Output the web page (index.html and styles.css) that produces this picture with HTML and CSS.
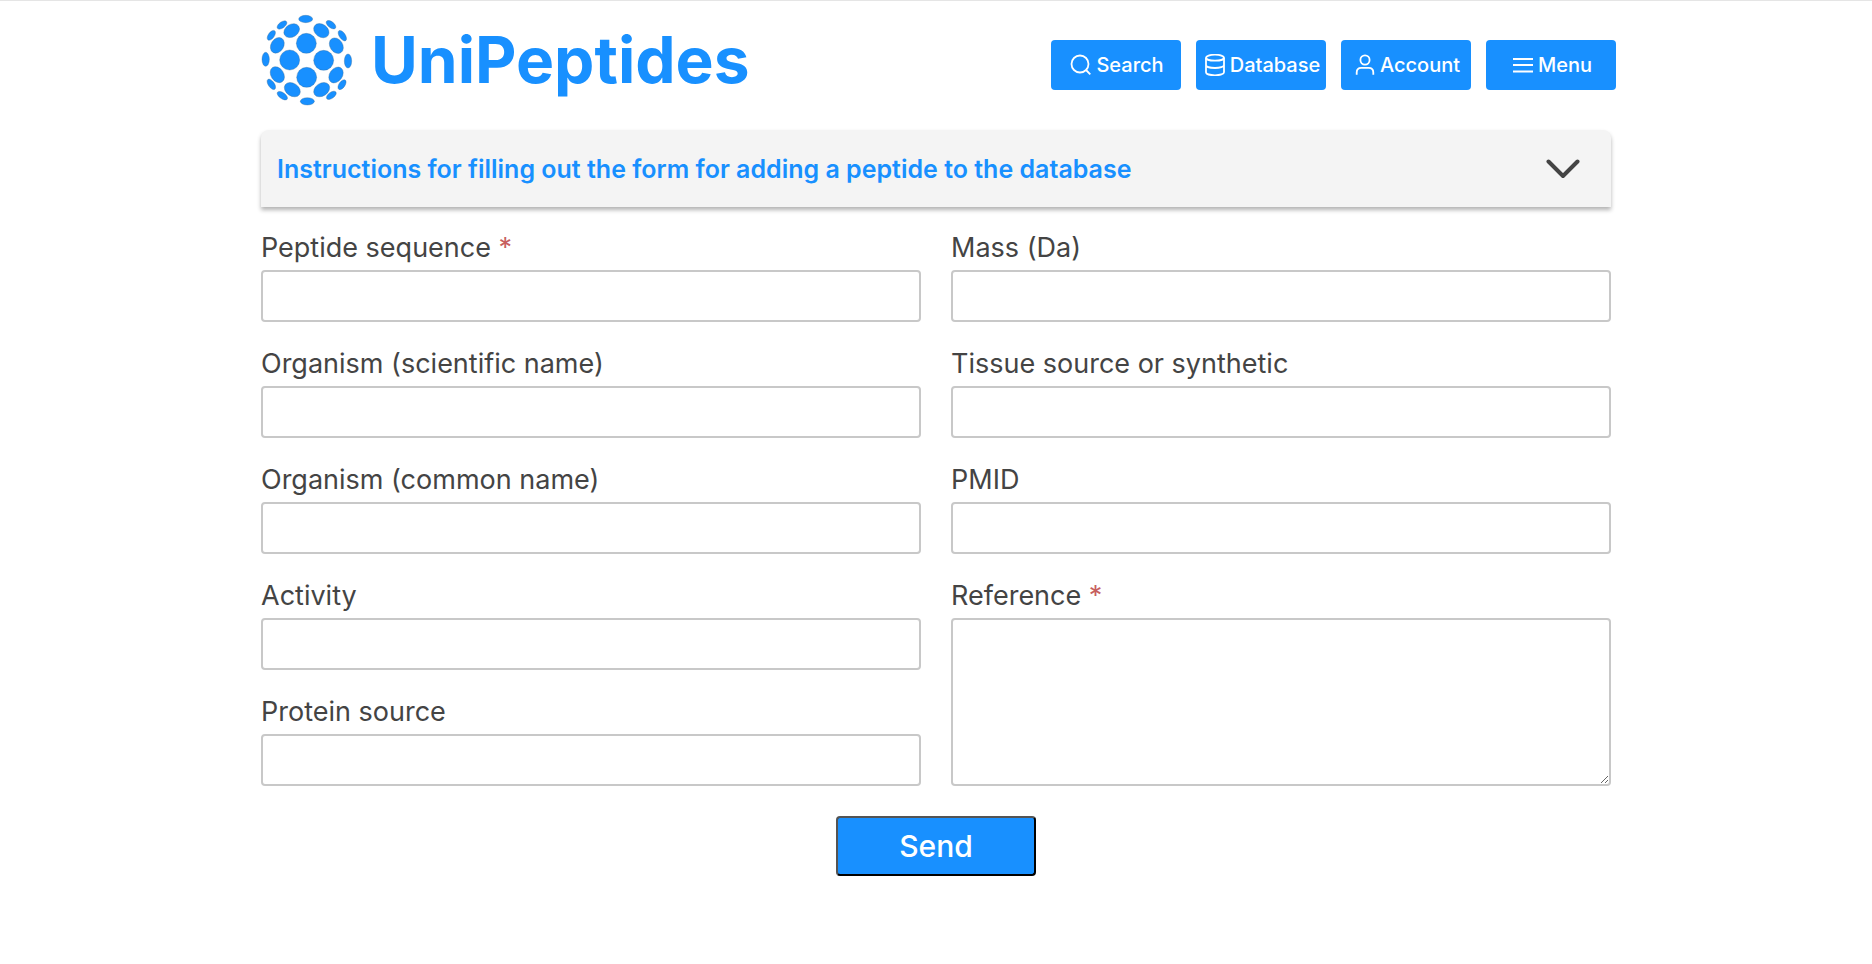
FILE: index.html
```html
<!DOCTYPE html>
<html lang="en">
<head>
<meta charset="utf-8">
<meta name="viewport" content="width=device-width, initial-scale=1">
<title>UniPeptides</title>
<link rel="stylesheet" href="styles.css">
</head>
<body>
<div class="page">
  <header class="header">
    <a class="brand" href="#">
      <svg class="brand-logo" viewBox="33 42 276 276" aria-hidden="true">
        <ellipse cx="167" cy="57" rx="21" ry="11"/>
        <ellipse cx="172" cy="304" rx="21" ry="11"/>
        <ellipse cx="47" cy="178" rx="11" ry="21"/>
        <ellipse cx="294" cy="183" rx="11" ry="21"/>
        <circle cx="169" cy="130" r="30"/>
        <circle cx="119" cy="180" r="30"/>
        <circle cx="221" cy="181" r="30"/>
        <circle cx="170" cy="232" r="30"/>
        <ellipse cx="125" cy="92" rx="25" ry="19" transform="rotate(-32 125 92)"/>
        <ellipse cx="214" cy="92" rx="25" ry="19" transform="rotate(36 214 92)"/>
        <ellipse cx="82" cy="136" rx="25" ry="19" transform="rotate(-58 82 136)"/>
        <ellipse cx="259" cy="137" rx="25" ry="19" transform="rotate(56 259 137)"/>
        <ellipse cx="82" cy="224" rx="26" ry="19" transform="rotate(56 82 224)"/>
        <ellipse cx="258" cy="225" rx="26" ry="19" transform="rotate(-54 258 225)"/>
        <ellipse cx="127" cy="269" rx="26" ry="19" transform="rotate(34 127 269)"/>
        <ellipse cx="215" cy="269" rx="26" ry="19" transform="rotate(-34 215 269)"/>
        <ellipse cx="96" cy="75" rx="17" ry="9" transform="rotate(-36 96 75)"/>
        <ellipse cx="64" cy="106" rx="17" ry="9" transform="rotate(-54 64 106)"/>
        <ellipse cx="243" cy="74" rx="17" ry="9" transform="rotate(38 243 74)"/>
        <ellipse cx="277" cy="107" rx="18" ry="9" transform="rotate(56 277 107)"/>
        <ellipse cx="64" cy="253" rx="18" ry="9" transform="rotate(55 64 253)"/>
        <ellipse cx="97" cy="287" rx="18" ry="9" transform="rotate(36 97 287)"/>
        <ellipse cx="276" cy="254" rx="17" ry="9" transform="rotate(-55 276 254)"/>
        <ellipse cx="244" cy="286" rx="17" ry="9" transform="rotate(-36 244 286)"/>
      </svg>
      <span class="brand-name">UniPeptides</span>
    </a>
    <nav class="nav">
      <button class="nav-button" type="button">
        <svg class="nav-icon" viewBox="0 0 22 22" aria-hidden="true"><circle cx="10" cy="10" r="8.5"/><path d="M16 16l4.3 4.3"/></svg>
        Search
      </button>
      <button class="nav-button" type="button">
        <svg class="nav-icon" viewBox="0 0 22 22" aria-hidden="true"><ellipse cx="11" cy="3.7" rx="9" ry="3"/><path d="M2 3.7v14.6c0 1.7 4 3 9 3s9-1.300 9-3V3.7M2 11c0 1.700 4 3 9 3s9-1.300 9-3"/></svg>
        Database
      </button>
      <button class="nav-button" type="button">
        <svg class="nav-icon" viewBox="0 0 22 22" aria-hidden="true"><circle cx="11" cy="6" r="4.6"/><path d="M2.7 20.8v-2.3c0-3 2-4.6 4.6-4.6h7.4c2.6 0 4.6 1.6 4.6 4.6v2.3"/></svg>
        Account
      </button>
      <button class="nav-button" type="button">
        <svg class="nav-icon" viewBox="0 0 22 22" aria-hidden="true"><path d="M1 5h20M1 11h20M1 17.5h20"/></svg>
        Menu
      </button>
    </nav>
  </header>

  <main>
    <button class="instructions" type="button" aria-expanded="false">
      <span>Instructions for filling out the form for adding a peptide to the database</span>
      <svg class="chevron" viewBox="0 0 34 20" aria-hidden="true"><path d="M2.5 2.5L17 17L31.5 2.5"/></svg>
    </button>

    <form class="form">
      <div class="columns">
        <div class="column">
          <div class="field">
            <label for="sequence">Peptide sequence <span class="required">*</span></label>
            <input id="sequence" type="text" required>
          </div>
          <div class="field">
            <label for="scientific">Organism (scientific name)</label>
            <input id="scientific" type="text">
          </div>
          <div class="field">
            <label for="common">Organism (common name)</label>
            <input id="common" type="text">
          </div>
          <div class="field">
            <label for="activity">Activity</label>
            <input id="activity" type="text">
          </div>
          <div class="field">
            <label for="protein">Protein source</label>
            <input id="protein" type="text">
          </div>
        </div>
        <div class="column">
          <div class="field">
            <label for="mass">Mass (Da)</label>
            <input id="mass" type="text">
          </div>
          <div class="field">
            <label for="tissue">Tissue source or synthetic</label>
            <input id="tissue" type="text">
          </div>
          <div class="field">
            <label for="pmid">PMID</label>
            <input id="pmid" type="text">
          </div>
          <div class="field field-tall">
            <label for="reference">Reference <span class="required">*</span></label>
            <textarea id="reference" required></textarea>
          </div>
        </div>
      </div>
      <button class="send" type="submit">Send</button>
    </form>
  </main>
</div>
</body>
</html>
```

FILE: styles.css
```css
* {
  box-sizing: border-box;
}

body {
  margin: 0;
  border-top: 1px solid #e5e5e5;
  background: #fff;
  color: #444;
  font-family: Inter, "Liberation Sans", sans-serif;
}

button,
input,
textarea {
  font: inherit;
}

.page {
  max-width: 1390px;
  margin: 0 auto;
  padding: 13px 20px 40px;
}

.header {
  display: flex;
  flex-wrap: wrap;
  align-items: flex-start;
  justify-content: space-between;
  margin-right: -5px;
}

.brand {
  display: flex;
  align-items: center;
  gap: 18px;
  color: #1890ff;
  text-decoration: none;
}

.brand-logo {
  width: 92px;
  height: 92px;
  fill: #1890ff;
  stroke: #34658f;
  stroke-width: 1;
}

.brand-name {
  font-size: 64px;
  font-weight: 700;
  line-height: 92px;
}

.nav {
  display: flex;
  flex-wrap: wrap;
  gap: 15px;
  padding-top: 26px;
}

.nav-button {
  display: flex;
  align-items: center;
  justify-content: center;
  gap: 4px;
  width: 130px;
  height: 50px;
  padding: 0 0 0 2px;
  border: 0;
  border-radius: 4px;
  background: #1890ff;
  color: #fff;
  font-size: 20px;
  font-weight: 500;
}

.nav-icon {
  flex: none;
  width: 22px;
  height: 22px;
  fill: none;
  stroke: #fff;
  stroke-width: 1.8;
}

.instructions {
  display: flex;
  align-items: center;
  justify-content: space-between;
  width: 100%;
  min-height: 77px;
  margin-top: 24px;
  padding: 0 31px 0 16px;
  border: 0;
  border-radius: 8px 8px 0 0;
  background: #f4f4f4;
  box-shadow: 0 3px 4px rgba(0, 0, 0, 0.3);
  color: #1890ff;
  font-size: 25px;
  font-weight: 600;
  text-align: left;
}

.chevron {
  flex: none;
  width: 34px;
  height: 20px;
  fill: none;
  stroke: #444;
  stroke-width: 4;
  stroke-linecap: round;
  stroke-linejoin: round;
}

.form {
  display: flex;
  flex-direction: column;
  align-items: center;
  gap: 30px;
  margin-top: 23px;
}

.columns {
  display: grid;
  grid-template-columns: 1fr 1fr;
  gap: 30px;
  width: 100%;
}

.column {
  display: flex;
  flex-direction: column;
  gap: 24px;
}

.field {
  display: flex;
  flex-direction: column;
  gap: 4px;
}

.field-tall {
  flex: 1;
}

.field label {
  font-size: 27px;
  line-height: 36px;
}

.required {
  color: #c75f5f;
}

.field input,
.field textarea {
  width: 100%;
  height: 52px;
  padding: 4px 10px;
  border: 2px solid #c8c8c8;
  border-radius: 4px;
  background: #fff;
  color: #444;
  font-size: 24px;
}

.field textarea {
  flex: 1;
  resize: vertical;
}

.send {
  width: 200px;
  height: 60px;
  padding: 0;
  border: 2px outset #000;
  border-radius: 4px;
  background: #1890ff;
  color: #fff;
  font-size: 30px;
  font-weight: 500;
}
```
